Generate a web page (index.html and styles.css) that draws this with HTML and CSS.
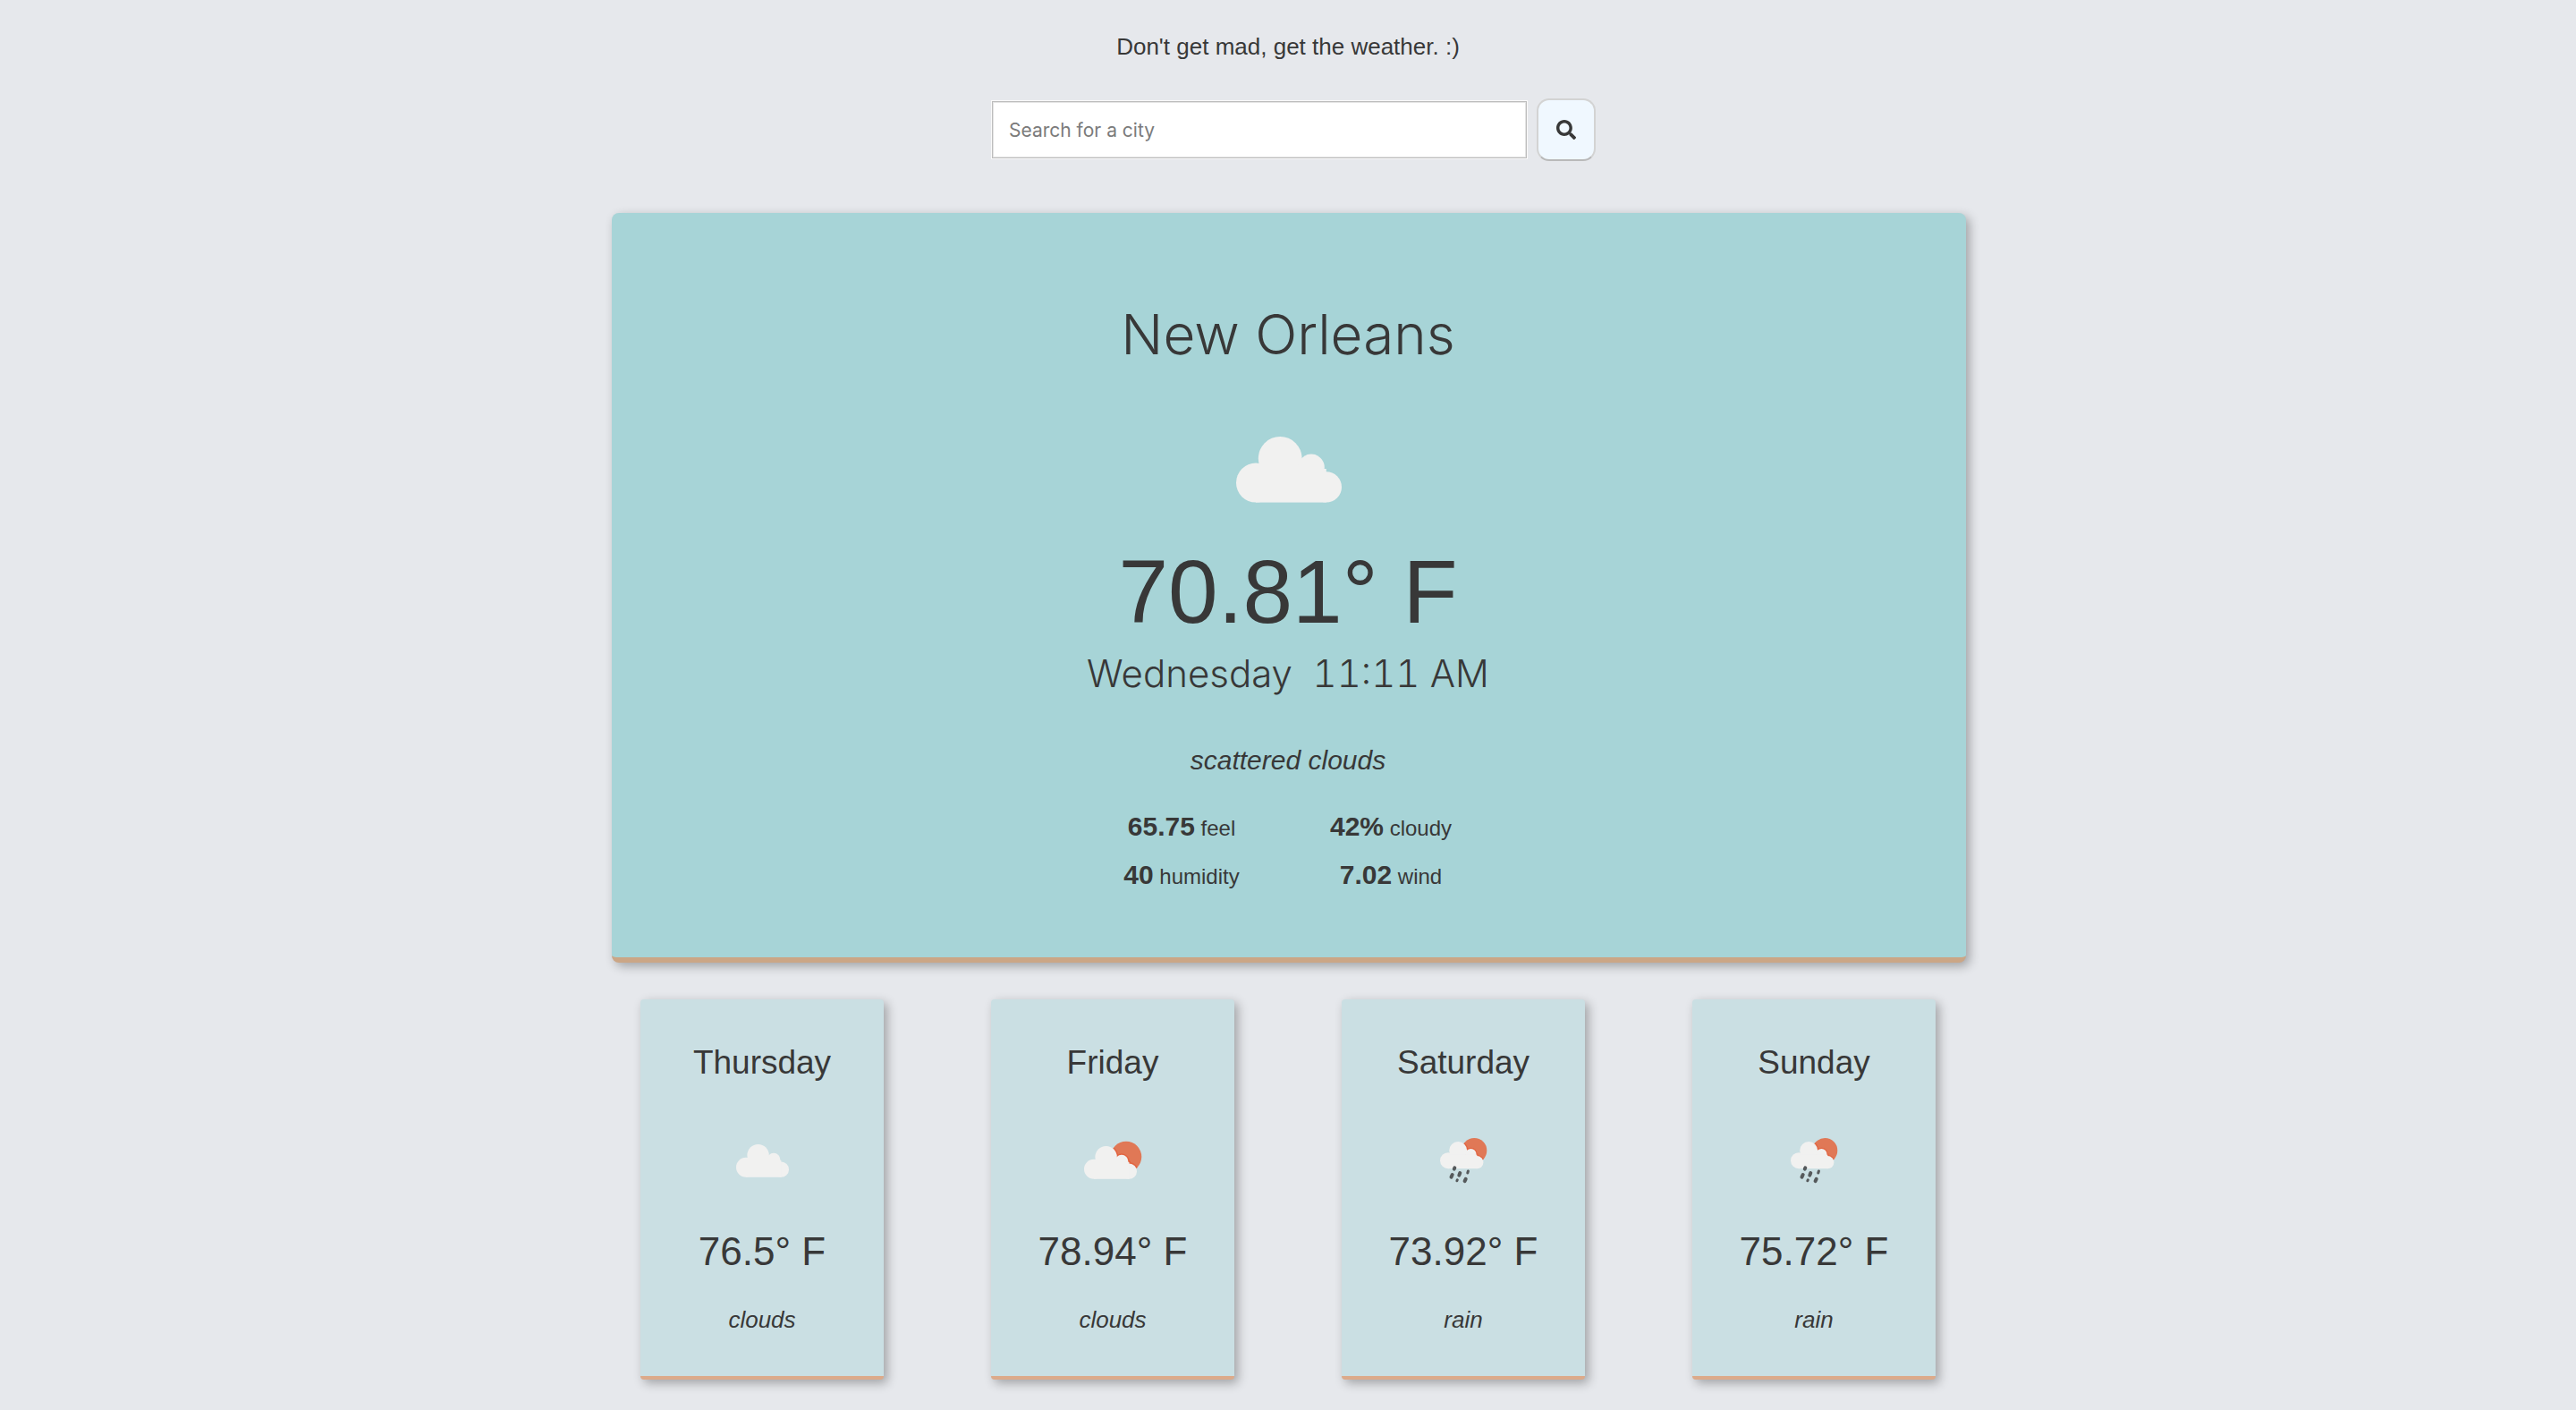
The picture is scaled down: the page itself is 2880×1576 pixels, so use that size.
FILE: index.html
```html
<!DOCTYPE html>
<html lang="en">
<head>
<meta charset="utf-8">
<meta name="viewport" content="width=device-width, initial-scale=1">
<title>Weather</title>
<link rel="stylesheet" href="styles.css">
</head>
<body>
<svg class="defs" aria-hidden="true">
  <clipPath id="sun-clip"><circle cx="65" cy="46" r="17.3"/></clipPath>
  <clipPath id="rain-clip"><circle cx="62.3" cy="39" r="14"/></clipPath>
  <symbol id="cloud" viewBox="0 0 100 100">
    <circle cx="32" cy="57.8" r="11"/><circle cx="45.6" cy="44.2" r="12.2"/><circle cx="63" cy="49.2" r="7.4"/><circle cx="71.4" cy="60.2" r="8.6"/><rect x="32" y="50" width="39.4" height="18.8"/>
  </symbol>
  <symbol id="cloud-sun" viewBox="0 0 100 100">
    <circle cx="65" cy="46" r="17.3" fill="#e07856"/>
    <g clip-path="url(#sun-clip)"><use href="#cloud" x="-3" y="2" width="100" height="100" fill="#e26440" stroke="#e26440" stroke-width="3"/></g>
    <use href="#cloud" x="-3" y="2" width="100" height="100"/>
  </symbol>
  <symbol id="cloud-rain" viewBox="0 0 100 100">
    <circle cx="62.3" cy="39" r="14" fill="#e07856"/>
    <g clip-path="url(#rain-clip)"><use href="#cloud" x="6.8" y="2.8" width="82" height="82" fill="#e26440" stroke="#e26440" stroke-width="3"/></g>
    <use href="#cloud" x="6.8" y="2.8" width="82" height="82"/>
    <g stroke="#55595b" stroke-width="4" stroke-linecap="round"><path d="M40.3 58.4l-.5 1.2M37.7 66l-1.2 2.6M46.3 64l-1 2.6M52.7 70.8l-1.1 2.4"/><path d="M55.4 62l-.6 2M43.3 71.8l-.4 1" stroke-width="3"/></g>
  </symbol>
</svg>
<main class="app">
  <p class="tagline">Don't get mad, get the weather. :)</p>
  <form class="search">
    <input class="search-input" type="search" placeholder="Search for a city" aria-label="Search for a city">
    <button class="search-button" type="button" aria-label="Search">
      <svg class="search-icon" viewBox="0 0 512 512" aria-hidden="true"><path d="M505 442.700L405.300 343c-4.500-4.500-10.600-7-17-7H372c27.600-35.300 44-79.700 44-128C416 93.100 322.900 0 208 0S0 93.100 0 208s93.100 208 208 208c48.300 0 92.700-16.400 128-44v16.300c0 6.400 2.500 12.500 7 17l99.700 99.700c9.400 9.400 24.600 9.400 33.900 0l28.300-28.300c9.400-9.400 9.400-24.600.1-34zM208 336c-70.700 0-128-57.200-128-128 0-70.700 57.200-128 128-128 70.700 0 128 57.200 128 128 0 70.700-57.200 128-128 128z"/></svg>
    </button>
  </form>
  <section class="current">
    <h1 class="city">New Orleans</h1>
    <svg class="icon icon-large" role="img" aria-label="Cloudy"><use href="#cloud"/></svg>
    <p class="temperature">70.81° F</p>
    <p class="date">Wednesday&nbsp; 11:11 AM</p>
    <p class="description">scattered clouds</p>
    <ul class="stats">
      <li><strong>65.75</strong> feel</li>
      <li><strong>42%</strong> cloudy</li>
      <li><strong>40</strong> humidity</li>
      <li><strong>7.02</strong> wind</li>
    </ul>
  </section>
  <section class="forecast">
    <article class="day">
      <h2 class="day-name">Thursday</h2>
      <svg class="icon" role="img" aria-label="Clouds"><use href="#cloud"/></svg>
      <p class="day-temp">76.5° F</p>
      <p class="day-desc">clouds</p>
    </article>
    <article class="day">
      <h2 class="day-name">Friday</h2>
      <svg class="icon" role="img" aria-label="Sun and clouds"><use href="#cloud-sun"/></svg>
      <p class="day-temp">78.94° F</p>
      <p class="day-desc">clouds</p>
    </article>
    <article class="day">
      <h2 class="day-name">Saturday</h2>
      <svg class="icon" role="img" aria-label="Rain"><use href="#cloud-rain"/></svg>
      <p class="day-temp">73.92° F</p>
      <p class="day-desc">rain</p>
    </article>
    <article class="day">
      <h2 class="day-name">Sunday</h2>
      <svg class="icon" role="img" aria-label="Rain"><use href="#cloud-rain"/></svg>
      <p class="day-temp">75.72° F</p>
      <p class="day-desc">rain</p>
    </article>
  </section>
</main>
</body>
</html>
```
FILE: styles.css
```css
*, *::before, *::after { box-sizing: border-box; }

body {
  margin: 0;
  background: #e6e8ec;
  color: #383838;
  font-family: "Liberation Sans", Arial, sans-serif;
  font-size: 26px;
  line-height: 32px;
}

h1, h2, p, ul { margin: 0; padding: 0; font-weight: 400; }

.defs { position: absolute; width: 0; height: 0; }

.app {
  max-width: 1568px;
  margin: 0 auto;
  padding: 36px 0 32px;
  text-align: center;
}

.search {
  display: flex;
  justify-content: center;
  align-items: center;
  gap: 11px;
  margin: 42px 0 58px;
  padding-left: 13px;
}

.search-input {
  width: 598px;
  height: 64px;
  padding: 0 18px;
  border: 1px solid #bdbdbd;
  border-radius: 0;
  background: #fff;
  box-shadow: 0 0 0 1px #fafafa, inset 0 0 0 1px #e4e4e4;
  color: #383838;
  font-family: Inter, "Liberation Sans", sans-serif;
  font-size: 21px;
  appearance: none;
}

.search-input::placeholder { color: #7b7b7b; opacity: 1; }

.search-button {
  display: flex;
  justify-content: center;
  align-items: center;
  width: 66px;
  height: 70px;
  padding: 0;
  border: 2px solid #d3d3d3;
  border-bottom-color: #b9b9b9;
  border-radius: 14px;
  background: #f0f8ff;
}

.search-icon { width: 22px; height: 22px; fill: #383838; }

.current {
  display: flex;
  flex-direction: column;
  align-items: center;
  margin: 0 26px 41px 28px;
  padding: 96px 22px 72px 20px;
  border-bottom: 6px solid #cba686;
  border-radius: 8px;
  background: #a7d4d7;
  box-shadow: 4px 4px 12px rgba(0, 0, 0, 0.3);
}

.city {
  font-family: Inter, "Liberation Sans", sans-serif;
  font-size: 62px;
  font-weight: 300;
  line-height: 80px;
}

.icon { width: 100px; height: 100px; fill: #f1f1f0; }

.icon-large { width: 200px; height: 200px; margin-top: 10px; }

.temperature { font-size: 100px; line-height: 112px; margin-top: -19px; }

.date {
  font-family: Inter, "Liberation Sans", sans-serif;
  font-size: 42px;
  font-weight: 300;
  font-variant-numeric: tabular-nums;
  line-height: 56px;
  margin-top: 8px;
}

.description { font-size: 30px; font-style: italic; line-height: 36px; margin-top: 51px; }

.stats {
  display: grid;
  grid-template-columns: 234px 234px;
  row-gap: 16px;
  margin-top: 38px;
  padding-right: 4px;
  list-style: none;
  font-size: 24px;
  line-height: 36px;
}

.stats strong { font-size: 30px; }

.forecast {
  display: grid;
  grid-template-columns: repeat(4, 1fr);
}

.day {
  display: flex;
  flex-direction: column;
  align-items: center;
  margin: 0 60px;
  padding: 47px 0;
  border-bottom: 4px solid #dcaa8a;
  border-radius: 4px;
  background: #cadfe3;
  box-shadow: 4px 4px 12px rgba(0, 0, 0, 0.3);
}

.day-name { font-size: 37px; line-height: 48px; }

.day .icon { margin: 35px 0 28px; }

.day-temp { font-size: 44px; line-height: 48px; }

.day-desc { font-style: italic; margin-top: 36px; }
```
